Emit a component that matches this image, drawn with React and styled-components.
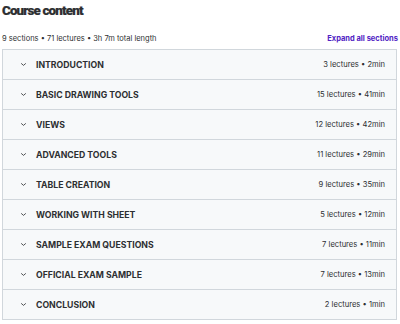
import React from 'react'
import styled, { createGlobalStyle } from 'styled-components'

const Global = createGlobalStyle`
  body {
    margin: 0;
    background: #fff;
    font-family: Inter, "Noto Sans", sans-serif;
    color: #2d2f31;
  }
`

const sections = [
  { title: 'Introduction', lectures: 3, time: '2min' },
  { title: 'Basic drawing tools', lectures: 15, time: '41min' },
  { title: 'Views', lectures: 12, time: '42min' },
  { title: 'Advanced tools', lectures: 11, time: '29min' },
  { title: 'Table creation', lectures: 9, time: '35min' },
  { title: 'Working with sheet', lectures: 5, time: '12min' },
  { title: 'Sample exam questions', lectures: 7, time: '11min' },
  { title: 'Official exam sample', lectures: 7, time: '13min' },
  { title: 'Conclusion', lectures: 2, time: '1min' },
]

const Chevron = () => (
  <svg width="7" height="7" viewBox="0 0 24 24" fill="none" stroke="#2d2f31" strokeWidth="2.8" strokeLinecap="round" strokeLinejoin="round">
    <path d="M5 9l7 6 7-6" />
  </svg>
)

const App = () => {
  return (
    <Wrap>
      <Global />
      <Title>Course content</Title>
      <Meta>
        <span>9 sections • 71 lectures • 3h 7m total length</span>
        <Expand>Expand all sections</Expand>
      </Meta>
      <List>
        {sections.map((s) => (
          <Row key={s.title}>
            <Left>
              <Chevron />
              <Label>{s.title}</Label>
            </Left>
            <Stats>{s.lectures} lectures • {s.time}</Stats>
          </Row>
        ))}
      </List>
    </Wrap>
  )
}

const Wrap = styled.div`
  width: 395px;
  padding: 0 0 0 2px;
`

const Title = styled.h2`
  margin: 0;
  padding-top: 1px;
  font-family: Roboto, "Liberation Sans", sans-serif;
  font-size: 13.4px;
  font-weight: 900;
  line-height: 20px;
  letter-spacing: -0.85px;
  -webkit-text-stroke: 0.2px #2d2f31;
`

const Meta = styled.div`
  display: flex;
  justify-content: space-between;
  align-items: center;
  margin-top: 10px;
  height: 14px;
  font-size: 7.5px;
  margin-bottom: 4px;
`

const Expand = styled.span`
  color: #5022c3;
  font-weight: 700;
  font-size: 7.5px;
  margin-right: -1px;
`

const List = styled.div`
  border: 1px solid #d1d7dc;
  border-bottom: none;
`

const Row = styled.div`
  display: flex;
  justify-content: space-between;
  align-items: center;
  height: 29px;
  padding: 0 11px 0 17px;
  background: #f7f9fa;
  border-bottom: 1px solid #d1d7dc;
`

const Left = styled.div`
  display: flex;
  align-items: center;
  gap: 9px;
`

const Label = styled.span`
  font-size: 8.7px;
  font-weight: 700;
  text-transform: uppercase;
`

const Stats = styled.span`
  font-size: 7.6px;
`

export default App
